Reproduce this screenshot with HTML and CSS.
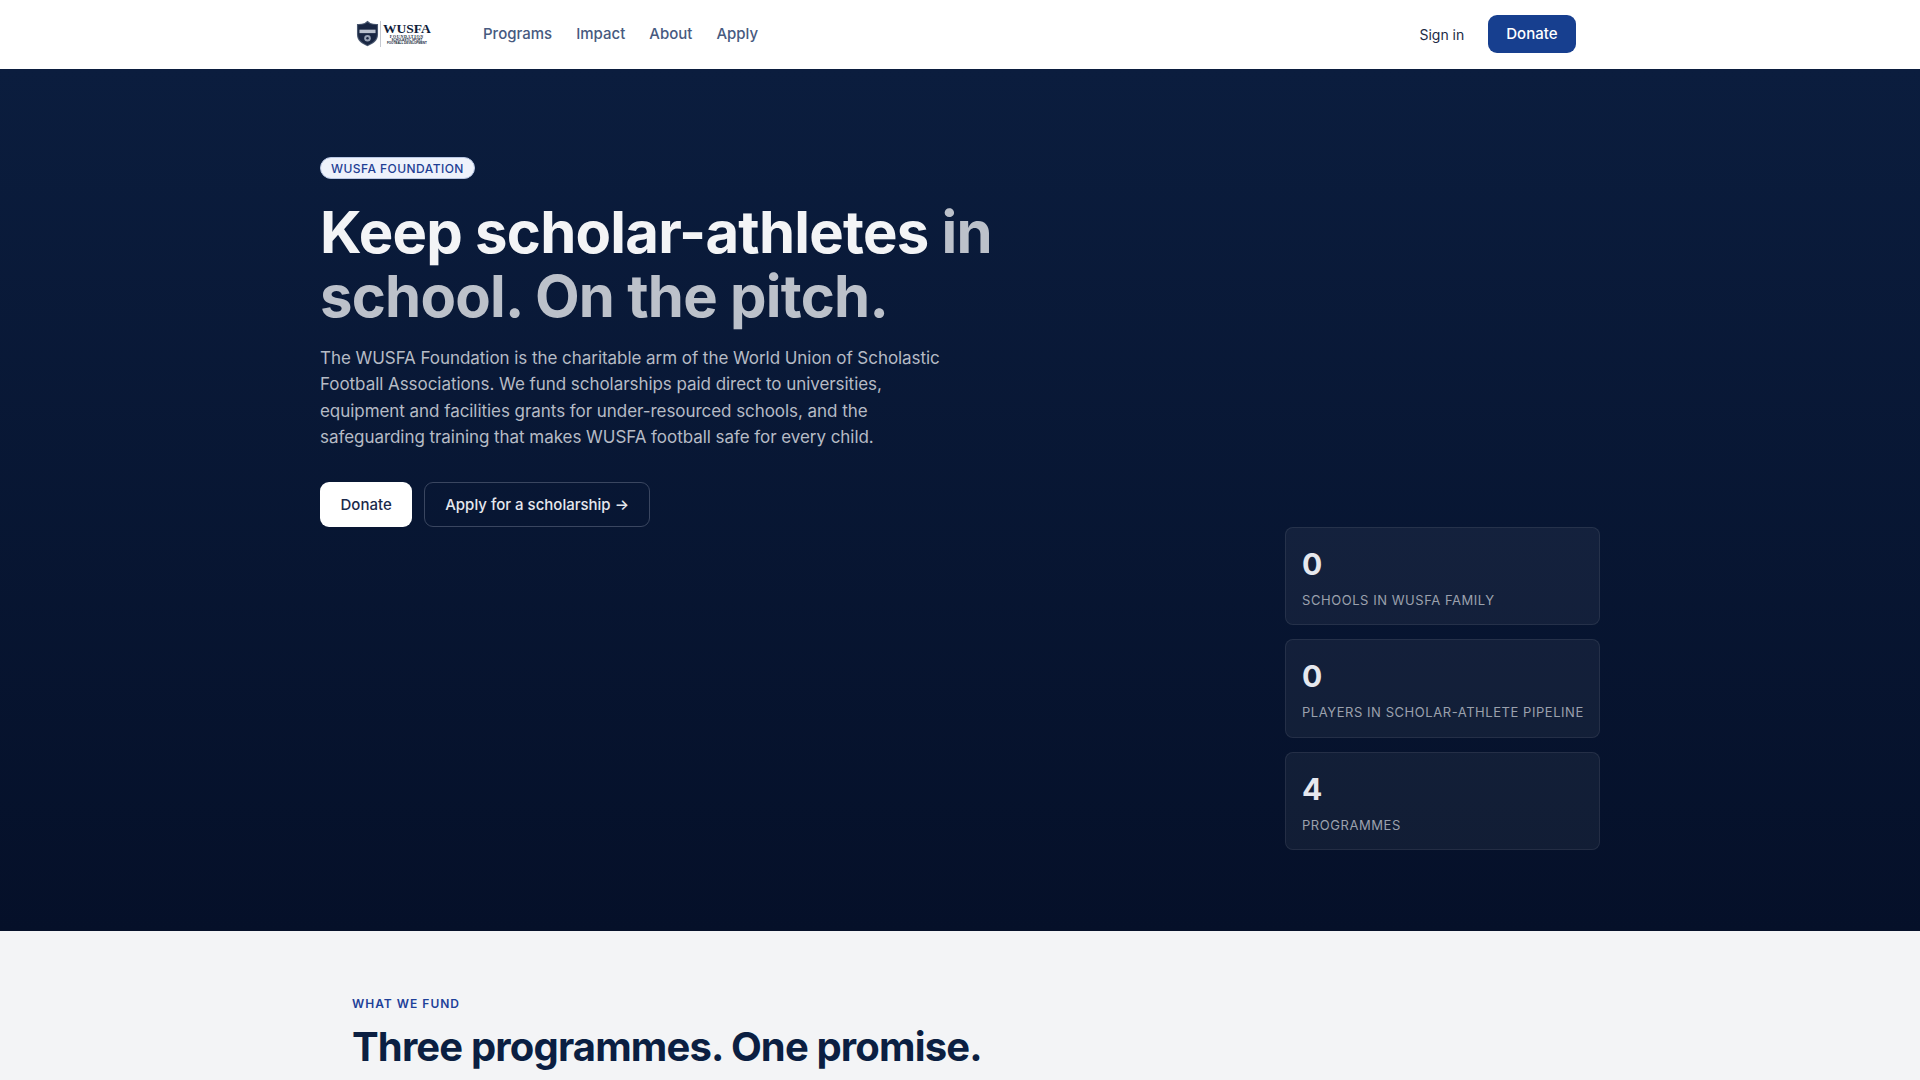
FILE: index.html
```html
<!DOCTYPE html>
<html lang="en">
<head>
<meta charset="utf-8">
<title>WUSFA Foundation</title>
<link rel="stylesheet" href="styles.css">
</head>
<body>
<header class="nav">
  <div class="nav-inner">
    <a class="logo" href="#">
      <svg class="logo-shield" viewBox="0 0 24 28" width="23" height="27" aria-hidden="true">
        <path d="M12 .8 L15 3 C17.5 4 20 4.2 23 4 L23 15 C23 21.5 17.5 25 12 27.2 C6.5 25 1 21.5 1 15 L1 4 C4 4.2 6.5 4 9 3 Z" fill="#4a5870"/>
        <path d="M12 2.4 L14.6 4.2 C17 5 19.5 5.3 21.8 5.2 L21.8 15 C21.8 20.6 17 24 12 26 C7 24 2.2 20.6 2.2 15 L2.2 5.2 C4.5 5.3 7 5 9.4 4.2 Z" fill="#1a2743"/>
        <rect x="3.6" y="10" width="16.8" height="3.6" fill="#b9c0cd"/>
        <circle cx="12" cy="19" r="3.4" fill="#9aa4b6"/>
        <circle cx="12" cy="19" r="1.3" fill="#1a2743"/>
      </svg>
      <span class="logo-rule"></span>
      <span class="logo-text">
        <span class="logo-name">WUSFA</span>
        <span class="logo-sub">FOUNDATION</span>
        <span class="logo-tiny">SCHOLASTIC SPORT</span>
        <span class="logo-tiny">FOOTBALL DEVELOPMENT</span>
      </span>
    </a>
    <nav class="nav-links">
      <a href="#">Programs</a>
      <a href="#">Impact</a>
      <a href="#">About</a>
      <a href="#">Apply</a>
    </nav>
    <div class="nav-actions">
      <a class="signin" href="#">Sign in</a>
      <a class="btn-nav" href="#">Donate</a>
    </div>
  </div>
</header>

<section class="hero">
  <div class="hero-inner">
    <div class="hero-copy">
      <span class="badge">WUSFA FOUNDATION</span>
      <h1>Keep scholar-athletes <span class="dim">in</span> <span class="dim">school. On the pitch.</span></h1>
      <p class="lead">The WUSFA Foundation is the charitable arm of the World Union of Scholastic Football Associations. We fund scholarships paid direct to universities, equipment and facilities grants for under-resourced schools, and the safeguarding training that makes WUSFA football safe for every child.</p>
      <div class="cta">
        <a class="btn btn-white" href="#">Donate</a>
        <a class="btn btn-ghost" href="#">Apply for a scholarship →</a>
      </div>
    </div>
    <div class="stats">
      <div class="stat"><div class="stat-num">0</div><div class="stat-label">Schools in WUSFA family</div></div>
      <div class="stat"><div class="stat-num">0</div><div class="stat-label">Players in scholar-athlete pipeline</div></div>
      <div class="stat"><div class="stat-num">4</div><div class="stat-label">Programmes</div></div>
    </div>
  </div>
</section>

<section class="fund">
  <div class="fund-inner">
    <div class="eyebrow">WHAT WE FUND</div>
    <h2>Three programmes. One promise.</h2>
  </div>
</section>
</body>
</html>
```
FILE: styles.css
```css
* { box-sizing: border-box; }
html, body { margin: 0; padding: 0; }
body { font-family: "Inter", "Liberation Sans", sans-serif; background: #f3f4f6; color: #0b1f42; overflow-x: hidden; }
a { text-decoration: none; color: inherit; }

.nav { background: #fff; height: 69px; }
.nav-inner { max-width: 1280px; margin: 0 auto; padding: 0 24px 1px 32px; height: 68px; display: flex; align-items: center; }
.logo { display: flex; align-items: center; width: 131px; padding-left: 4px; }
.logo-shield { flex: none; }
.logo-rule { width: 1px; height: 26px; background: #c5c9d1; margin: 0 2px 0 1px; }
.logo-text { display: flex; flex-direction: column; align-items: center; color: #0f1c38; }
.logo-name { font: 700 13.5px/12px "Liberation Serif", serif; }
.logo-sub { font: 700 4px/4px "Liberation Serif", serif; letter-spacing: .7px; }
.logo-tiny { font: 700 3px/3px "Liberation Sans", sans-serif; }

.nav-links { display: flex; gap: 24px; font-size: 15px; font-weight: 500; color: #475a80; }
.nav-actions { margin-left: auto; display: flex; align-items: center; gap: 23.5px; }
.signin { font-size: 14px; color: #1c2a45; padding-top: 1px; }
.btn-nav { background: #173f8f; color: #fff; font-size: 15px; font-weight: 500; border-radius: 9px; height: 38px; padding: 0 18.5px; display: flex; align-items: center; }

.hero { background: linear-gradient(180deg, #0b1d3e 0%, #051029 100%); height: 862px; }
.hero-inner { max-width: 1280px; margin: 0 auto; padding-top: 88px; display: flex; flex-direction: column; }
.hero-copy { width: 700px; }
.badge { display: inline-flex; align-items: center; height: 22px; padding: 0 10px; background: #eef2fb; border: 1px solid #b9c7e4; border-radius: 999px; color: #1e3f94; font-size: 12px; font-weight: 500; letter-spacing: .45px; vertical-align: top; }
h1 { margin: 21px 0 0; font-size: 58px; line-height: 64px; font-weight: 700; letter-spacing: -.75px; color: #f3f4f6; }
.dim { color: #bcc1ca; }
.lead { margin: 17px 0 0; width: 640px; font-size: 17px; line-height: 26.4px; letter-spacing: -.05px; color: #b6bbc5; }
.cta { margin-top: 31px; display: flex; gap: 12px; }
.btn { height: 45px; border-radius: 9px; font-size: 15px; font-weight: 500; display: flex; align-items: center; padding: 0 20.5px; }
.btn-white { background: #fff; color: #1a2a4a; }
.btn-ghost { border: 1px solid #3a4660; color: #e6e8ee; padding: 0 20px; }

.stats { align-self: flex-end; width: 315px; display: flex; flex-direction: column; gap: 14px; }
.stat { height: 98.6px; padding: 18px 16px 0 16px; background: rgba(255,255,255,.05); border: 1px solid rgba(255,255,255,.08); border-radius: 8px; }
.stat-num { font-size: 30px; line-height: 36px; font-weight: 700; color: #e6e8ee; }
.stat-label { margin-top: 8px; font-size: 13px; line-height: 20px; letter-spacing: .55px; text-transform: uppercase; color: #9ba1ad; white-space: nowrap; }

.fund { background: #f3f4f6; }
.fund-inner { max-width: 1280px; margin: 0 auto; padding: 65px 32px 0; }
.eyebrow { font-size: 12px; line-height: 16px; font-weight: 600; letter-spacing: 1px; color: #1e4199; }
h2 { margin: 11px 0 0; font-size: 40px; line-height: 48px; font-weight: 700; letter-spacing: -.85px; color: #0b1f42; }
```
